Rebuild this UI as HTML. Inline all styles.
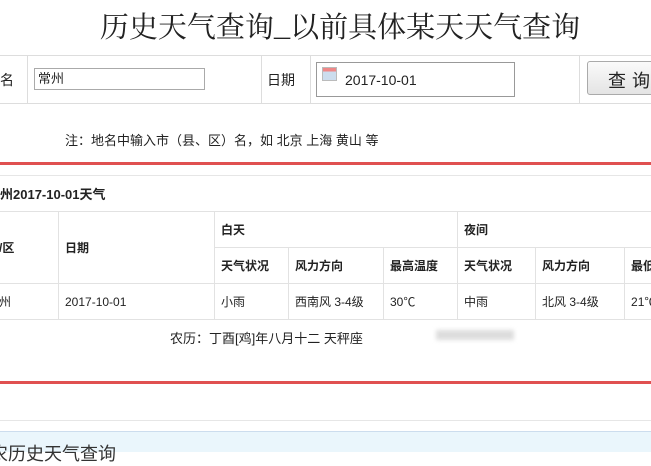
<!DOCTYPE html>
<html><head><meta charset="utf-8"><style>
body{margin:0;width:651px;height:451px;overflow:hidden;background:#fff;font-family:"Liberation Sans","Noto Sans CJK SC",sans-serif;color:#222;position:relative}
.a{position:absolute;white-space:nowrap}
.ln{position:absolute;background:#ddd}
td{border:1px solid #e2e2e2;padding:0 6px;font-size:12px;white-space:nowrap;overflow:hidden}
</style></head><body>
<div class="a" style="left:0;width:680px;top:5px;text-align:center;font-family:'Noto Serif CJK SC',serif;font-size:29px;color:#222">历史天气查询_以前具体某天天气查询</div>
<div class="ln" style="left:0;top:55px;width:651px;height:1px"></div>
<div class="ln" style="left:0;top:103px;width:651px;height:1px"></div>
<div class="ln" style="left:27px;top:55px;width:1px;height:48px"></div>
<div class="ln" style="left:261px;top:55px;width:1px;height:48px"></div>
<div class="ln" style="left:310px;top:55px;width:1px;height:48px"></div>
<div class="ln" style="left:579px;top:55px;width:1px;height:48px"></div>
<div class="a" style="left:0;top:70px;font-size:14px">名</div>
<div class="a" style="left:34px;top:68px;width:171px;height:22px;border:1px solid #aaa;box-sizing:border-box;font-size:13px;line-height:20px;padding:0 3px">常州</div>
<div class="a" style="left:267px;top:70px;font-size:14px">日期</div>
<div class="a" style="left:316px;top:62px;width:199px;height:35px;border:1px solid #999;box-sizing:border-box;font-size:14px;padding:9px 0 0 28px">2017-10-01</div>
<div class="a" style="left:322px;top:67px;width:13px;height:12px;background:linear-gradient(#e88 0 30%,#cde 30%);border:1px solid #bbb"></div>
<div class="a" style="left:587px;top:61px;width:70px;height:34px;border:1px solid #aaa;border-radius:3px;box-sizing:border-box;background:linear-gradient(#fafafa,#e4e4e4);font-size:18px;padding:5px 0 0 20px;letter-spacing:6px">查询</div>
<div class="a" style="left:65px;top:130px;font-size:13px">注：地名中输入市（县、区）名，如 北京 上海 黄山 等</div>
<div class="a" style="left:0;top:162px;width:651px;height:3px;background:#e05050"></div>
<div class="ln" style="left:0;top:175px;width:651px;height:1px;background:#e6e6e6"></div>
<div class="a" style="left:0;top:184px;font-size:13px;font-weight:bold">州2017-10-01天气</div>
<table style="position:absolute;left:-8px;top:211px;border-collapse:collapse;table-layout:fixed;width:712px">
<colgroup><col style="width:66px"><col style="width:156px"><col style="width:74px"><col style="width:95px"><col style="width:74px"><col style="width:78px"><col style="width:89px"><col style="width:80px"></colgroup>
<tr style="height:36px;font-weight:bold"><td rowspan="2">/区</td><td rowspan="2">日期</td><td colspan="3">白天</td><td colspan="3">夜间</td></tr>
<tr style="height:36px;font-weight:bold"><td>天气状况</td><td>风力方向</td><td>最高温度</td><td>天气状况</td><td>风力方向</td><td>最低温度</td></tr>
<tr style="height:36px;font-size:12px"><td>州</td><td>2017-10-01</td><td>小雨</td><td>西南风 3-4级</td><td>30℃</td><td>中雨</td><td>北风 3-4级</td><td>21℃</td></tr>
</table>
<div class="a" style="left:170px;top:328px;font-size:13px">农历：丁酉[鸡]年八月十二 天秤座</div>
<div class="a" style="left:436px;top:330px;width:78px;height:10px;background:#ddd;filter:blur(2px)"></div>
<div class="a" style="left:0;top:381px;width:651px;height:3px;background:#e05050"></div>
<div class="ln" style="left:0;top:420px;width:651px;height:1px;background:#e6e6e6"></div>
<div class="a" style="left:0;top:431px;width:651px;height:20px;background:#eaf6fc;border-top:1px solid #cde"></div>
<div class="a" style="left:-10px;top:440px;font-size:18px;color:#333">农历史天气查询</div>
</body></html>
